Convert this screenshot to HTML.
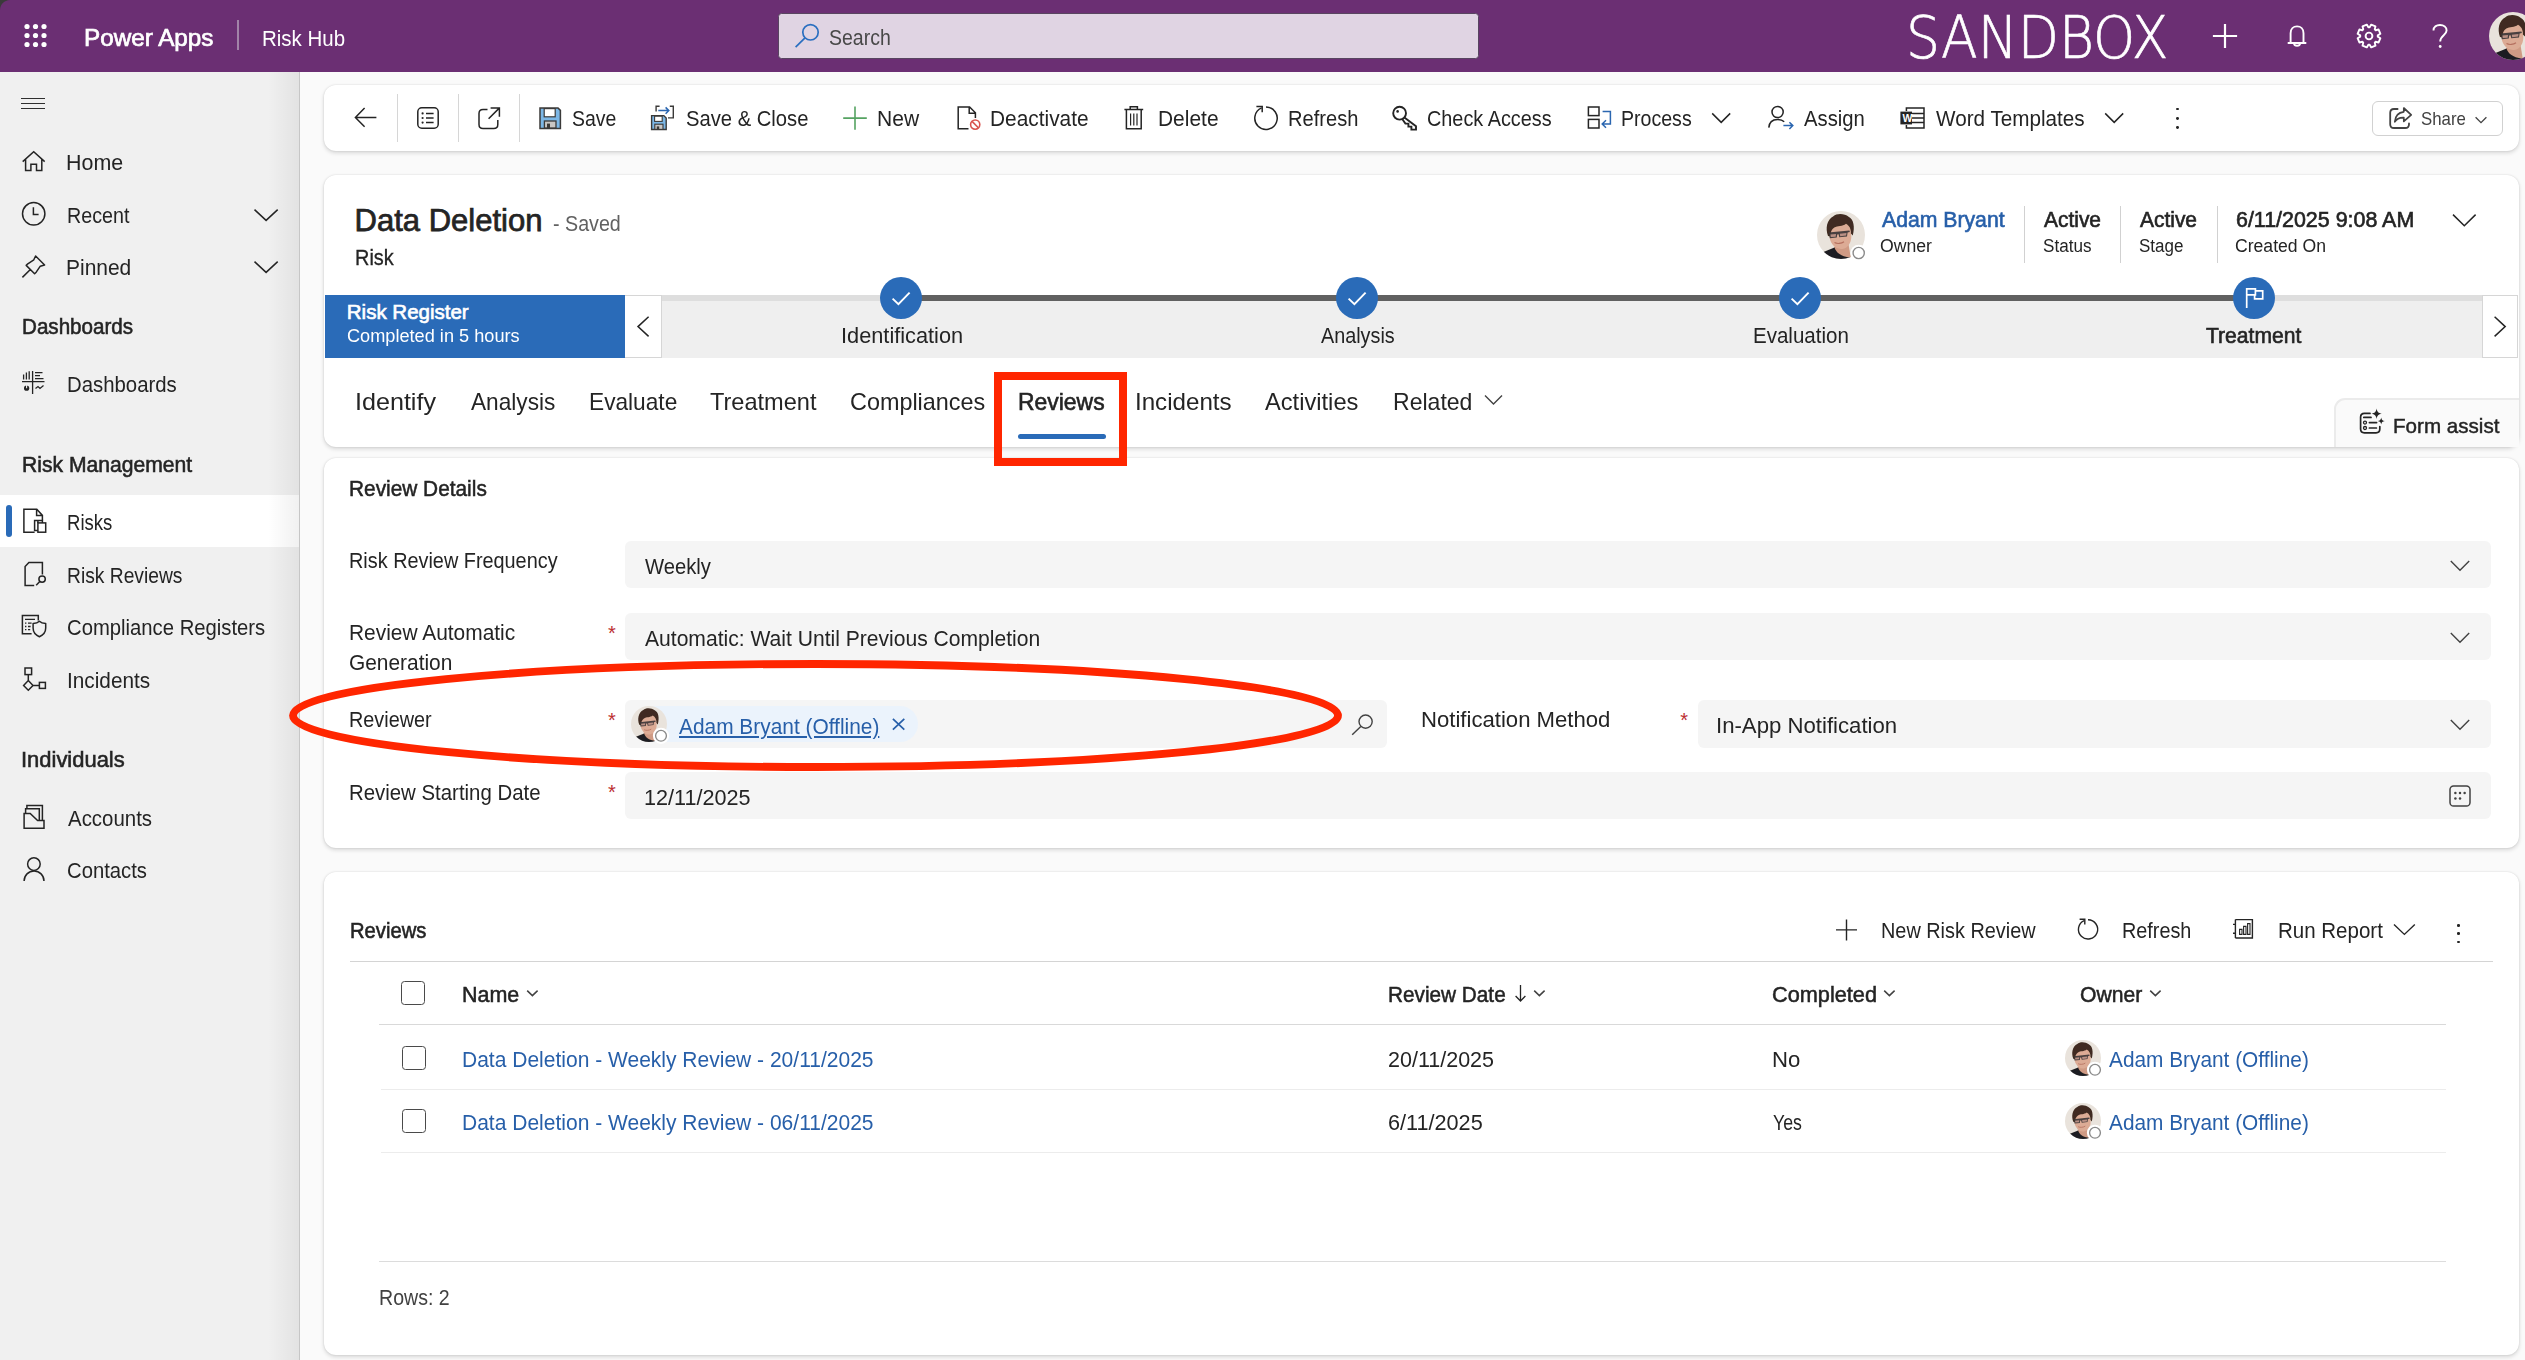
<!DOCTYPE html><html lang="en"><head><meta charset="utf-8"><title>Data Deletion - Risk - Power Apps</title><style>
html,body{margin:0;padding:0}body{width:2525px;height:1360px;overflow:hidden;position:relative;background:#fafafa;font-family:"Liberation Sans", sans-serif;color:#242424}
#app>div,#app>svg,#app>span{position:absolute;display:block}#app>span{white-space:nowrap;transform-origin:0 50%}
</style></head><body><div id="app">
<div style="left:0px;top:72px;width:2525px;height:1288px;background:#fafafa;"></div>
<div style="left:0px;top:72px;width:300px;height:1288px;background:#f0f0f0;"></div>
<div style="left:0px;top:495px;width:300px;height:52px;background:#ffffff;"></div>
<div style="left:268px;top:72px;width:32px;height:1288px;background:linear-gradient(to right,rgba(0,0,0,0),rgba(0,0,0,.06));"></div>
<div style="left:299px;top:72px;width:1px;height:1288px;background:#c6c6c6;"></div>
<div style="left:6px;top:505px;width:6px;height:32px;background:#2a6bb8;border-radius:3px;"></div>
<div style="left:0px;top:0px;width:2525px;height:72px;background:#6b2f73;"></div>
<svg style="left:0px;top:0px;" width="12" height="12" viewBox="0 0 12 12" fill="none"><path d="M0 0H10C4 0.5 0.5 4 0 10Z" fill="#3a3a3a"/></svg>
<svg style="left:22px;top:22px;" width="28" height="28" viewBox="0 0 28 28" fill="none"><circle cx="5" cy="4.5" r="2.6" fill="#fff"/><circle cx="5" cy="13.5" r="2.6" fill="#fff"/><circle cx="5" cy="22.5" r="2.6" fill="#fff"/><circle cx="13.5" cy="4.5" r="2.6" fill="#fff"/><circle cx="13.5" cy="13.5" r="2.6" fill="#fff"/><circle cx="13.5" cy="22.5" r="2.6" fill="#fff"/><circle cx="22" cy="4.5" r="2.6" fill="#fff"/><circle cx="22" cy="13.5" r="2.6" fill="#fff"/><circle cx="22" cy="22.5" r="2.6" fill="#fff"/></svg>
<span style="left:83.76px;top:27.00px;font-size:23.6px;line-height:23.6px;color:#fff;transform:scaleX(1.0282);-webkit-text-stroke:0.7px currentColor;">Power Apps</span>
<div style="left:237px;top:20px;width:1.5px;height:30px;background:#a283a8;"></div>
<span style="left:261.90px;top:29.00px;font-size:21.5px;line-height:21.5px;color:#fff;transform:scaleX(0.9524);">Risk Hub</span>
<div style="left:777.5px;top:12.5px;width:701px;height:46.5px;background:#e0d4e3;box-sizing:border-box;border:1px solid #584560;border-radius:3.5px;"></div>
<svg style="left:795px;top:23px;" width="26" height="26" viewBox="0 0 26 26" fill="none"><circle cx="15.5" cy="9.3" r="7.7" stroke="#2a6fc0" stroke-width="1.7"/><path d="M10 14.8L0.6 24.2" stroke="#2a6fc0" stroke-width="1.7"/></svg>
<span style="left:828.93px;top:28.00px;font-size:21.3px;line-height:21.3px;color:#484848;transform:scaleX(0.9154);">Search</span>
<span style="left:1906.21px;top:9.00px;font-size:58.4px;line-height:58.4px;color:#fff;font-family:'DejaVu Sans Light','DejaVu Sans',sans-serif;font-weight:200;transform:scaleX(0.9173);-webkit-text-stroke:0.7px currentColor;">SANDBOX</span>
<svg style="left:2211px;top:22px;" width="28" height="28" viewBox="0 0 28 28" fill="none"><path d="M14 1.9V26.1M1.9 14H26.1" stroke="#fff" stroke-width="2.2"/></svg>
<svg style="left:2285px;top:23px;" width="24" height="26" viewBox="0 0 24 26" fill="none"><path d="M5.6 19.6V10.2C5.6 5.8 8.4 3.4 12.05 3.4S18.5 5.8 18.5 10.2V19.6M2.7 20H21.3M9 20.7C9.4 23.5 14.7 23.5 15.1 20.7" stroke="#fff" stroke-width="1.9"/></svg>
<svg style="left:2355px;top:22px;" width="28" height="28" viewBox="0 0 28 28" fill="none"><path d="M25.39 16.22L23.62 20.48L20.66 19.75L19.75 20.66L20.48 23.62L16.22 25.39L14.64 22.78L13.36 22.78L11.78 25.39L7.52 23.62L8.25 20.66L7.34 19.75L4.38 20.48L2.61 16.22L5.22 14.64L5.22 13.36L2.61 11.78L4.38 7.52L7.34 8.25L8.25 7.34L7.52 4.38L11.78 2.61L13.36 5.22L14.64 5.22L16.22 2.61L20.48 4.38L19.75 7.34L20.66 8.25L23.62 7.52L25.39 11.78L22.78 13.36L22.78 14.64Z" stroke="#fff" stroke-width="1.9" stroke-linejoin="round"/><circle cx="14" cy="14" r="3.4" stroke="#fff" stroke-width="1.9"/></svg>
<svg style="left:2430px;top:23px;" width="20" height="27" viewBox="0 0 20 27" fill="none"><path d="M3.5 7.5C3.5 3.8 6.5 2 10 2C13.8 2 16.6 4.3 16.6 7.6C16.6 12.2 10.2 12.6 10.2 18.5" stroke="#fff" stroke-width="1.9"/><circle cx="10.2" cy="23.5" r="1.4" fill="#fff"/></svg>
<svg style="left:2489.0px;top:11.5px;overflow:visible" width="48" height="48" viewBox="0 0 48 48"><defs><clipPath id="avc1"><circle cx="24" cy="24" r="24"/></clipPath><filter id="avc1b" x="-20%" y="-20%" width="140%" height="140%"><feGaussianBlur stdDeviation="0.55"/></filter></defs><g clip-path="url(#avc1)"><rect width="48" height="48" fill="#e9e3dc"/><g filter="url(#avc1b)"><path d="M31 30L34 48H19L17 36Z" fill="#cf9a84"/><path d="M4 42L17.5 36.5C19 41 23 45.5 33.5 46.5L36 49H3Z" fill="#1f1f20"/><ellipse cx="23.4" cy="24.8" rx="10.9" ry="13.4" transform="rotate(-8 23 25)" fill="#dcab95"/><ellipse cx="25" cy="17.5" rx="9.6" ry="7" fill="#dcab95"/><path d="M11 25C8.2 17 9.8 8.6 16.4 5.2C19.6 2 27.8 2.2 31.6 5.8C36.8 8.4 38 16 35.8 24.5L33.9 22.5C34.2 18 32.4 14.6 29 12.8C25.5 15.6 20.5 14.6 17.3 16.6C14.6 18.4 13.4 21.4 13.3 25.6Z" fill="#3f2b20"/><path d="M11.3 21.6L32.4 19.4L32.9 21L30.6 21.5L30 25.4L22.3 26.3L21.6 23.2L20.2 23.4L19.8 26.6L12.8 27.2L12.2 23.4Z" fill="#3a3435" opacity=".9"/><path d="M13.4 23.6L19 23.1L18.7 25.7L13.8 26.1Z M22.8 22.7L29.5 22L29.1 24.6L23.2 25.2Z" fill="#b98f84"/><path d="M17.5 31.6C20 33 24.5 32.6 27 30.8" stroke="#b5705f" stroke-width="1.1" fill="none"/></g></g></svg>
<div style="left:21px;top:97.9px;width:24px;height:1.2px;background:#2f2f2f;"></div>
<div style="left:21px;top:102.9px;width:24px;height:1.2px;background:#2f2f2f;"></div>
<div style="left:21px;top:107.9px;width:24px;height:1.2px;background:#2f2f2f;"></div>
<svg style="left:21px;top:149px;" width="26" height="25" viewBox="0 0 26 25" fill="none"><path d="M1.7 12.6L12.7 2.8L23.7 12.6M4.6 10.6V21.6H9.9V15.2H15.5V21.6H20.8V10.6" stroke="#242424" stroke-width="1.5" fill="none" stroke-linejoin="miter"/></svg>
<span style="left:66.39px;top:153.00px;font-size:21.3px;line-height:21.3px;color:#242424;transform:scaleX(1.0056);">Home</span>
<svg style="left:20px;top:200px;" width="28" height="28" viewBox="0 0 28 28" fill="none"><circle cx="13.7" cy="13.8" r="11.2" stroke="#242424" stroke-width="1.5" fill="none"/><path d="M13.4 7.2V14.6H18.6" stroke="#242424" stroke-width="1.5" fill="none"/></svg>
<span style="left:66.53px;top:206.00px;font-size:21.3px;line-height:21.3px;color:#242424;transform:scaleX(0.9242);">Recent</span>
<svg style="left:252px;top:207px;" width="28" height="16" viewBox="0 0 28 16" fill="none"><path d="M2.5 2.6L14.1 13.4L25.7 2.6" stroke="#242424" stroke-width="1.5" fill="none"/></svg>
<svg style="left:20px;top:253px;" width="28" height="27" viewBox="0 0 28 27" fill="none"><path d="M2.4 24.4L10.6 16.2M15.6 3L24.6 12L20.3 13.2L16.2 19.2L14.6 20.8L6.2 12.4L7.8 10.8L13.8 6.8Z" stroke="#242424" stroke-width="1.5" fill="none" stroke-linejoin="round"/></svg>
<span style="left:66.42px;top:258.00px;font-size:21.3px;line-height:21.3px;color:#242424;transform:scaleX(0.9841);">Pinned</span>
<svg style="left:252px;top:259px;" width="28" height="16" viewBox="0 0 28 16" fill="none"><path d="M2.5 2.6L14.1 13.4L25.7 2.6" stroke="#242424" stroke-width="1.5" fill="none"/></svg>
<span style="left:21.83px;top:317.00px;font-size:21.3px;line-height:21.3px;color:#242424;transform:scaleX(0.9675);-webkit-text-stroke:0.55px currentColor;">Dashboards</span>
<span style="left:21.81px;top:455.00px;font-size:21.3px;line-height:21.3px;color:#242424;transform:scaleX(0.9912);-webkit-text-stroke:0.55px currentColor;">Risk Management</span>
<span style="left:20.74px;top:750.00px;font-size:21.3px;line-height:21.3px;color:#242424;transform:scaleX(1.0306);-webkit-text-stroke:0.55px currentColor;">Individuals</span>
<svg style="left:21px;top:370px;" width="25" height="25" viewBox="0 0 25 25" fill="none"><path d="M1 11.6H23.5M11.6 1V24M2.6 9.5V4.5M5.4 9.5V2.4M8.2 9.5V1.2M14 2.6H21.5M14 5.6H19M14 8.6H22.5M14.5 18.5L17 16.6L19 18.4L22.5 15.6" stroke="#242424" stroke-width="1.3" fill="none"/><circle cx="5.6" cy="18.2" r="2.6" fill="#242424"/><path d="M5.6 18.2V14.6H9.2" stroke="#f0f0f0" stroke-width="1.1" fill="none"/></svg>
<span style="left:66.87px;top:375.00px;font-size:21.3px;line-height:21.3px;color:#242424;transform:scaleX(0.9558);">Dashboards</span>
<svg style="left:22px;top:507px;" width="26" height="27" viewBox="0 0 26 27" fill="none"><path d="M12.6 25.2H1.9V2.3H14.8L20.4 8.4V13.2M14.6 2.5V8.6H20.2" stroke="#242424" stroke-width="1.5" fill="none"/><path d="M15.9 16V13.6H20.4V16M15.9 23.4H12.6V13.6H15.9" stroke="#242424" stroke-width="1.5" fill="none"/><rect x="15.9" y="15.9" width="7.8" height="9.3" stroke="#242424" stroke-width="1.5" fill="none"/></svg>
<span style="left:66.99px;top:513.00px;font-size:21.3px;line-height:21.3px;color:#242424;transform:scaleX(0.8700);">Risks</span>
<svg style="left:22px;top:560px;" width="26" height="27" viewBox="0 0 26 27" fill="none"><path d="M12.2 25.4H3.1V6.6L6.9 2.5H20.4V14.4" stroke="#242424" stroke-width="1.5" fill="none"/><circle cx="20.1" cy="19.1" r="3.2" stroke="#242424" stroke-width="1.5" fill="none"/><path d="M17.8 21.5L14.2 25.3" stroke="#242424" stroke-width="1.5" fill="none"/></svg>
<span style="left:66.95px;top:566.00px;font-size:21.3px;line-height:21.3px;color:#242424;transform:scaleX(0.9032);">Risk Reviews</span>
<svg style="left:20px;top:613px;" width="28" height="26" viewBox="0 0 28 26" fill="none"><path d="M11.6 20.7H2.4V2.6H18.3V7.4" stroke="#242424" stroke-width="1.5" fill="none"/><path d="M5 6.4H15M5 10.1H6.4M8 10.1H11.6M5 13.5H6.4M8 13.5H10.6M5 16.6H6.4M8 16.6H10.2" stroke="#242424" stroke-width="1.3" fill="none"/><path d="M19.4 8.2C20.8 9.6 22.9 10.4 25.7 10.6V15C25.7 19.4 22.8 22.2 19.4 23.7C16 22.2 13.1 19.4 13.1 15V10.6C15.9 10.4 18 9.6 19.4 8.2Z" stroke="#242424" stroke-width="1.5" fill="none" stroke-linejoin="round"/></svg>
<span style="left:66.87px;top:618.00px;font-size:21.3px;line-height:21.3px;color:#242424;transform:scaleX(0.9515);">Compliance Registers</span>
<svg style="left:21px;top:665px;" width="27" height="27" viewBox="0 0 27 27" fill="none"><rect x="4" y="3" width="6.6" height="6.6" stroke="#242424" stroke-width="1.5" fill="none"/><path d="M7.3 9.6V15.6M7.3 15.6L12 20.4L7.3 25.2L2.6 20.4ZM12 20.4H18.4" stroke="#242424" stroke-width="1.5" fill="none" stroke-linejoin="miter"/><rect x="18.4" y="17.4" width="6" height="6" stroke="#242424" stroke-width="1.5" fill="none"/></svg>
<span style="left:66.84px;top:671.00px;font-size:21.3px;line-height:21.3px;color:#242424;transform:scaleX(0.9759);">Incidents</span>
<svg style="left:22px;top:803px;" width="24" height="27" viewBox="0 0 24 27" fill="none"><path d="M4.9 5.6V2.4H20.4V17.4M3.6 10.4V5.8H17.3V17.4M2.1 10.5H8.2L15.6 17.5H22V25.2H2.1Z" stroke="#242424" stroke-width="1.5" fill="none" stroke-linejoin="miter"/></svg>
<span style="left:67.82px;top:809.00px;font-size:21.3px;line-height:21.3px;color:#242424;transform:scaleX(0.9593);">Accounts</span>
<svg style="left:22px;top:855px;" width="24" height="27" viewBox="0 0 24 27" fill="none"><circle cx="11.9" cy="9.1" r="6.3" stroke="#242424" stroke-width="1.5" fill="none"/><path d="M2.1 25.9A9.95 9.95 0 0 1 22 25.9" stroke="#242424" stroke-width="1.5" fill="none"/></svg>
<span style="left:66.87px;top:861.00px;font-size:21.3px;line-height:21.3px;color:#242424;transform:scaleX(0.9512);">Contacts</span>
<div style="left:324px;top:84.5px;width:2195px;height:66px;background:#fff;border-radius:12px;box-shadow:0 0 2px rgba(0,0,0,.12),0 2px 4px rgba(0,0,0,.14);"></div>
<svg style="left:353px;top:105px;" width="26" height="25" viewBox="0 0 26 25" fill="none"><path d="M23.4 12.4H2.6M11.6 3L2.4 12.4L11.6 21.8" stroke="#242424" stroke-width="1.5" fill="none"/></svg>
<div style="left:397px;top:94px;width:1px;height:47.5px;background:#d6d6d6;"></div>
<div style="left:458px;top:94px;width:1px;height:47.5px;background:#d6d6d6;"></div>
<div style="left:519px;top:94px;width:1px;height:47.5px;background:#d6d6d6;"></div>
<svg style="left:416px;top:106px;" width="24" height="24" viewBox="0 0 24 24" fill="none"><rect x="1.8" y="1.8" width="20.4" height="20.4" rx="4" stroke="#242424" stroke-width="1.5" fill="none"/><path d="M10 7.4H17.6M10 12H17.6M10 16.6H17.6" stroke="#242424" stroke-width="1.5" fill="none"/><circle cx="6.6" cy="7.4" r="1.1" fill="#242424"/><circle cx="6.6" cy="12" r="1.1" fill="#242424"/><circle cx="6.6" cy="16.6" r="1.1" fill="#242424"/></svg>
<svg style="left:477px;top:106px;" width="24" height="24" viewBox="0 0 24 24" fill="none"><path d="M10.5 3.6H6C3.6 3.6 2 5.2 2 7.6V18.4C2 20.8 3.6 22.4 6 22.4H16.8C19.2 22.4 20.8 20.8 20.8 18.4V14M13.6 2H22.4V10.8M22 2.4L11.6 12.8" stroke="#242424" stroke-width="1.5" fill="none"/></svg>
<svg style="left:538px;top:106px;" width="24" height="24" viewBox="0 0 24 24" fill="none"><path d="M2 2H20L22.4 4.4V22.4H2Z" fill="#7cb7e6" stroke="#3b3a39" stroke-width="1.5"/><rect x="6.2" y="2.6" width="11" height="8.2" fill="#fff" stroke="#3b3a39" stroke-width="1.2"/><rect x="6.4" y="15" width="11.6" height="7" fill="#c8c6c4" stroke="#3b3a39" stroke-width="1.3"/><rect x="9" y="17.6" width="3" height="4.6" fill="#3b3a39"/></svg>
<span style="left:572.12px;top:109.00px;font-size:21.3px;line-height:21.3px;color:#242424;transform:scaleX(0.9130);">Save</span>
<svg style="left:650px;top:104px;" width="26" height="27" viewBox="0 0 26 27" fill="none"><path d="M1.6 11.6H13.8L16.2 14V25.5H1.6Z" fill="#7cb7e6" stroke="#3b3a39" stroke-width="1.4"/><rect x="4.6" y="12.2" width="7.6" height="5.2" fill="#fff" stroke="#3b3a39" stroke-width="1.1"/><rect x="4.8" y="20.2" width="8.2" height="5.2" fill="#c8c6c4" stroke="#3b3a39" stroke-width="1.1"/><rect x="6.8" y="22.4" width="2.4" height="3" fill="#3b3a39"/><path d="M9.6 2.3H6.1V7.4M19.8 2.3H23.3V13.9H18" stroke="#3b3a39" stroke-width="1.4" fill="none"/><path d="M8.3 6.6H18.7M15.6 3.4L18.8 6.6L15.6 9.8" stroke="#2b66b0" stroke-width="1.5" fill="none"/></svg>
<span style="left:685.85px;top:109.00px;font-size:21.3px;line-height:21.3px;color:#242424;transform:scaleX(0.9488);">Save &amp; Close</span>
<svg style="left:842px;top:105px;" width="26" height="26" viewBox="0 0 26 26" fill="none"><path d="M13 1.4V24.8M1.2 13.1H24.8" stroke="#55a362" stroke-width="1.6"/></svg>
<span style="left:877.42px;top:109.00px;font-size:21.3px;line-height:21.3px;color:#242424;transform:scaleX(0.9878);">New</span>
<svg style="left:956px;top:105px;" width="26" height="26" viewBox="0 0 26 26" fill="none"><path d="M12.5 23.8H2.2V2H13.6L19.4 7.8V13M13.2 2.2V8.2H19.2" stroke="#242424" stroke-width="1.5" fill="none"/><circle cx="19.2" cy="19.6" r="4.6" stroke="#d9534f" stroke-width="1.6" fill="#fff"/><path d="M16.1 16.4L22.3 22.8" stroke="#d9534f" stroke-width="1.6"/></svg>
<span style="left:989.84px;top:109.00px;font-size:21.3px;line-height:21.3px;color:#242424;transform:scaleX(0.9796);">Deactivate</span>
<svg style="left:1123px;top:105px;" width="22" height="26" viewBox="0 0 22 26" fill="none"><path d="M1.4 4.6H20.2M7.2 4.4V1.8H14.4V4.4M3.4 4.8V23.8H18.2V4.8" stroke="#242424" stroke-width="1.5" fill="none"/><path d="M7.6 8.6V20.4M10.8 8.6V20.4M14 8.6V20.4" stroke="#242424" stroke-width="1.2"/></svg>
<span style="left:1158.02px;top:109.00px;font-size:21.3px;line-height:21.3px;color:#242424;transform:scaleX(0.9831);">Delete</span>
<svg style="left:1252px;top:104px;" width="28" height="28" viewBox="0 0 28 28" fill="none"><path d="M9.6 3.9A11.2 11.2 0 1 0 14 3" stroke="#242424" stroke-width="1.5" fill="none"/><path d="M4.4 2.4H10.2V8.2" stroke="#242424" stroke-width="1.5" fill="none"/></svg>
<span style="left:1287.91px;top:109.00px;font-size:21.3px;line-height:21.3px;color:#242424;transform:scaleX(0.9437);">Refresh</span>
<svg style="left:1391px;top:105px;" width="28" height="26" viewBox="0 0 28 26" fill="none"><circle cx="8.6" cy="8.2" r="6.4" stroke="#242424" stroke-width="1.9" fill="none"/><circle cx="6.6" cy="6.4" r="1.3" fill="#242424"/><path d="M13.4 12.4L25 21.2V24.6H20.4V21.6H17.4V18.6H14.4L11.4 14.2" stroke="#242424" stroke-width="1.9" fill="none" stroke-linejoin="miter"/></svg>
<span style="left:1427.44px;top:109.00px;font-size:21.3px;line-height:21.3px;color:#242424;transform:scaleX(0.9318);">Check Access</span>
<svg style="left:1586px;top:105px;" width="28" height="26" viewBox="0 0 28 26" fill="none"><rect x="2.4" y="2" width="10.6" height="8.6" stroke="#242424" stroke-width="1.5" fill="none"/><rect x="2.4" y="14.4" width="10.6" height="8.6" stroke="#242424" stroke-width="1.5" fill="none"/><path d="M16.6 6.4H24.4V19H16.4M20 15.2L16.2 19L20 22.8" stroke="#2b66b0" stroke-width="1.5" fill="none"/></svg>
<span style="left:1620.96px;top:109.00px;font-size:21.3px;line-height:21.3px;color:#242424;transform:scaleX(0.9189);">Process</span>
<svg style="left:1710px;top:111px;" width="22" height="14" viewBox="0 0 22 14" fill="none"><path d="M2.2 2.4L11.2 11.4L20.2 2.4" stroke="#242424" stroke-width="1.5" fill="none"/></svg>
<svg style="left:1767px;top:104px;" width="28" height="27" viewBox="0 0 28 27" fill="none"><circle cx="10.6" cy="8" r="5.6" stroke="#242424" stroke-width="1.5" fill="none"/><path d="M1.8 23.6C2.2 17.6 6.2 15.4 10.6 15.4C13.4 15.4 15.6 16.2 17.2 17.8" stroke="#242424" stroke-width="1.5" fill="none"/><path d="M16.4 21.6H25.6M22.4 18.2L25.8 21.6L22.4 25" stroke="#2b66b0" stroke-width="1.5" fill="none"/></svg>
<span style="left:1804.41px;top:109.00px;font-size:21.3px;line-height:21.3px;color:#242424;transform:scaleX(0.9516);">Assign</span>
<svg style="left:1899px;top:106px;" width="27" height="24" viewBox="0 0 27 24" fill="none"><path d="M7.4 5V2H25V22H7.4V19M12.6 7.4H25M12.6 12H25M12.6 16.6H25" stroke="#242424" stroke-width="1.5" fill="none"/><rect x="1.4" y="5.6" width="11.6" height="12.8" fill="#242424"/></svg>
<span style="left:1902.60px;top:113.00px;font-size:10.5px;line-height:10.5px;color:#fff;font-weight:700;">W</span>
<span style="left:1936.39px;top:109.00px;font-size:21.3px;line-height:21.3px;color:#242424;transform:scaleX(0.9706);">Word Templates</span>
<svg style="left:2103px;top:111px;" width="22" height="14" viewBox="0 0 22 14" fill="none"><path d="M2.2 2.4L11.2 11.4L20.2 2.4" stroke="#242424" stroke-width="1.5" fill="none"/></svg>
<div style="left:2176.1px;top:107.6px;width:2.8px;height:2.8px;background:#242424;border-radius:50%;"></div>
<div style="left:2176.1px;top:116.8px;width:2.8px;height:2.8px;background:#242424;border-radius:50%;"></div>
<div style="left:2176.1px;top:126.1px;width:2.8px;height:2.8px;background:#242424;border-radius:50%;"></div>
<div style="left:2372px;top:101px;width:131px;height:35px;background:#fff;box-sizing:border-box;border:1px solid #d1d1d1;border-radius:6px;"></div>
<svg style="left:2388px;top:106px;" width="25" height="24" viewBox="0 0 25 24" fill="none"><path d="M9.6 3H6C3.6 3 2.2 4.4 2.2 6.8V18.2C2.2 20.6 3.6 22 6 22H17.2C19.6 22 21 20.6 21 18.2V17.4" stroke="#424242" stroke-width="1.8" fill="none" stroke-linecap="round"/><path d="M15.8 2L23.2 8.8L15.8 15.4V11.6C11.4 11.4 8.6 12.8 6.8 15.8C7.2 10.4 10.2 6.4 15.8 5.8Z" stroke="#424242" stroke-width="1.7" fill="none" stroke-linejoin="round"/></svg>
<span style="left:2421.44px;top:111.00px;font-size:17.8px;line-height:17.8px;color:#424242;transform:scaleX(0.9457);">Share</span>
<svg style="left:2474px;top:115px;" width="14" height="10" viewBox="0 0 14 10" fill="none"><path d="M1.6 2.2L7 7.6L12.4 2.2" stroke="#424242" stroke-width="1.3" fill="none"/></svg>
<div style="left:324px;top:175px;width:2195px;height:271.6px;background:#fff;border-radius:12px;box-shadow:0 0 2px rgba(0,0,0,.12),0 2px 4px rgba(0,0,0,.14);"></div>
<span style="left:354.59px;top:205.00px;font-size:31px;line-height:31px;color:#242424;-webkit-text-stroke:0.75px currentColor;">Data Deletion</span>
<span style="left:552.84px;top:214.00px;font-size:21.3px;line-height:21.3px;color:#616161;transform:scaleX(0.9236);">- Saved</span>
<span style="left:354.93px;top:248.00px;font-size:21.3px;line-height:21.3px;color:#242424;transform:scaleX(0.9359);-webkit-text-stroke:0.3px currentColor;">Risk</span>
<svg style="left:1817.0px;top:211.0px;overflow:visible" width="48" height="48" viewBox="0 0 48 48"><defs><clipPath id="avc2"><circle cx="24" cy="24" r="24"/></clipPath><filter id="avc2b" x="-20%" y="-20%" width="140%" height="140%"><feGaussianBlur stdDeviation="0.55"/></filter></defs><g clip-path="url(#avc2)"><rect width="48" height="48" fill="#e9e3dc"/><g filter="url(#avc2b)"><path d="M31 30L34 48H19L17 36Z" fill="#cf9a84"/><path d="M4 42L17.5 36.5C19 41 23 45.5 33.5 46.5L36 49H3Z" fill="#1f1f20"/><ellipse cx="23.4" cy="24.8" rx="10.9" ry="13.4" transform="rotate(-8 23 25)" fill="#dcab95"/><ellipse cx="25" cy="17.5" rx="9.6" ry="7" fill="#dcab95"/><path d="M11 25C8.2 17 9.8 8.6 16.4 5.2C19.6 2 27.8 2.2 31.6 5.8C36.8 8.4 38 16 35.8 24.5L33.9 22.5C34.2 18 32.4 14.6 29 12.8C25.5 15.6 20.5 14.6 17.3 16.6C14.6 18.4 13.4 21.4 13.3 25.6Z" fill="#3f2b20"/><path d="M11.3 21.6L32.4 19.4L32.9 21L30.6 21.5L30 25.4L22.3 26.3L21.6 23.2L20.2 23.4L19.8 26.6L12.8 27.2L12.2 23.4Z" fill="#3a3435" opacity=".9"/><path d="M13.4 23.6L19 23.1L18.7 25.7L13.8 26.1Z M22.8 22.7L29.5 22L29.1 24.6L23.2 25.2Z" fill="#b98f84"/><path d="M17.5 31.6C20 33 24.5 32.6 27 30.8" stroke="#b5705f" stroke-width="1.1" fill="none"/></g></g><circle cx="41.70" cy="42.00" r="8.30" fill="#fff"/><circle cx="41.70" cy="42.00" r="5.60" fill="#fff" stroke="#8a8a8a" stroke-width="1.35"/></svg>
<span style="left:1881.80px;top:210.00px;font-size:21.3px;line-height:21.3px;color:#275fa9;transform:scaleX(0.9960);-webkit-text-stroke:0.6px currentColor;">Adam Bryant</span>
<span style="left:1880.21px;top:237.00px;font-size:18px;line-height:18px;color:#242424;transform:scaleX(0.9808);">Owner</span>
<div style="left:2023.5px;top:206px;width:1px;height:56.5px;background:#d1d1d1;"></div>
<span style="left:2043.80px;top:210.00px;font-size:21.3px;line-height:21.3px;color:#242424;transform:scaleX(0.9828);-webkit-text-stroke:0.6px currentColor;">Active</span>
<span style="left:2042.85px;top:237.00px;font-size:18px;line-height:18px;color:#242424;transform:scaleX(0.9490);">Status</span>
<div style="left:2120px;top:206px;width:1px;height:56.5px;background:#d1d1d1;"></div>
<span style="left:2139.80px;top:210.00px;font-size:21.3px;line-height:21.3px;color:#242424;transform:scaleX(0.9828);-webkit-text-stroke:0.6px currentColor;">Active</span>
<span style="left:2138.86px;top:237.00px;font-size:18px;line-height:18px;color:#242424;transform:scaleX(0.9444);">Stage</span>
<div style="left:2216.5px;top:206px;width:1px;height:56.5px;background:#d1d1d1;"></div>
<span style="left:2235.80px;top:210.00px;font-size:21.3px;line-height:21.3px;color:#242424;transform:scaleX(1.0057);-webkit-text-stroke:0.6px currentColor;">6/11/2025 9:08 AM</span>
<span style="left:2235.22px;top:237.00px;font-size:18px;line-height:18px;color:#242424;transform:scaleX(0.9780);">Created On</span>
<svg style="left:2451px;top:212px;" width="27" height="17" viewBox="0 0 27 17" fill="none"><path d="M2 2.6L13.3 13.8L24.6 2.6" stroke="#242424" stroke-width="1.5" fill="none"/></svg>
<div style="left:661px;top:295px;width:1821px;height:62.5px;background:#efefef;"></div>
<div style="left:661px;top:295px;width:1821px;height:6px;background:#dedede;"></div>
<div style="left:901px;top:295px;width:1353px;height:6px;background:#616161;"></div>
<div style="left:324.5px;top:295px;width:300.5px;height:62.5px;background:#2a6bb8;"></div>
<span style="left:346.80px;top:302.00px;font-size:20.5px;line-height:20.5px;color:#fff;-webkit-text-stroke:0.65px currentColor;">Risk Register</span>
<span style="left:346.79px;top:327.00px;font-size:18px;line-height:18px;color:#fff;transform:scaleX(1.0089);">Completed in 5 hours</span>
<div style="left:625px;top:295px;width:36.5px;height:62.5px;background:#fff;box-sizing:border-box;border:1px solid #d6d6d6;border-left:none;"></div>
<svg style="left:634px;top:314px;" width="18" height="25" viewBox="0 0 18 25" fill="none"><path d="M14.6 2.8L4 12.6L14.6 22.4" stroke="#242424" stroke-width="1.5" fill="none"/></svg>
<div style="left:2481.5px;top:295px;width:36.5px;height:62.5px;background:#fff;box-sizing:border-box;border:1px solid #d6d6d6;"></div>
<svg style="left:2491px;top:314px;" width="18" height="25" viewBox="0 0 18 25" fill="none"><path d="M3.6 2.8L14.2 12.6L3.6 22.4" stroke="#242424" stroke-width="1.5" fill="none"/></svg>
<svg style="left:880px;top:276.8px;" width="42" height="42" viewBox="0 0 42 42" fill="none"><circle cx="21" cy="21" r="21" fill="#2a6bb8"/><path d="M12.6 21.6L18.4 27.2L29.6 15.6" stroke="#fff" stroke-width="1.9" fill="none"/></svg>
<span style="left:840.71px;top:326.00px;font-size:21.3px;line-height:21.3px;color:#242424;transform:scaleX(1.0214);">Identification</span>
<svg style="left:1336px;top:276.8px;" width="42" height="42" viewBox="0 0 42 42" fill="none"><circle cx="21" cy="21" r="21" fill="#2a6bb8"/><path d="M12.6 21.6L18.4 27.2L29.6 15.6" stroke="#fff" stroke-width="1.9" fill="none"/></svg>
<span style="left:1321.27px;top:326.00px;font-size:21.3px;line-height:21.3px;color:#242424;transform:scaleX(0.9295);">Analysis</span>
<svg style="left:1779px;top:276.8px;" width="42" height="42" viewBox="0 0 42 42" fill="none"><circle cx="21" cy="21" r="21" fill="#2a6bb8"/><path d="M12.6 21.6L18.4 27.2L29.6 15.6" stroke="#fff" stroke-width="1.9" fill="none"/></svg>
<span style="left:1752.79px;top:326.00px;font-size:21.3px;line-height:21.3px;color:#242424;transform:scaleX(0.9639);">Evaluation</span>
<svg style="left:2233px;top:276.8px;" width="42" height="42" viewBox="0 0 42 42" fill="none"><circle cx="21" cy="21" r="21" fill="#2a6bb8"/><path d="M13.7 30.9V11.9H22.4V17.9H13.7M22.4 13.8H29.7V21.8H21.6V17.9" stroke="#fff" stroke-width="1.7" fill="none"/></svg>
<span style="left:2206.30px;top:326.00px;font-size:21.3px;line-height:21.3px;color:#242424;transform:scaleX(0.9897);-webkit-text-stroke:0.6px currentColor;">Treatment</span>
<span style="left:354.68px;top:390.00px;font-size:24px;line-height:24px;color:#242424;transform:scaleX(1.0467);">Identify</span>
<span style="left:471.41px;top:390.00px;font-size:24px;line-height:24px;color:#242424;transform:scaleX(0.9432);">Analysis</span>
<span style="left:588.88px;top:390.00px;font-size:24px;line-height:24px;color:#242424;transform:scaleX(0.9451);">Evaluate</span>
<span style="left:709.82px;top:390.00px;font-size:24px;line-height:24px;color:#242424;transform:scaleX(0.9813);">Treatment</span>
<span style="left:849.83px;top:390.00px;font-size:24px;line-height:24px;color:#242424;transform:scaleX(0.9745);">Compliances</span>
<span style="left:1134.79px;top:390.00px;font-size:24px;line-height:24px;color:#242424;transform:scaleX(1.0054);">Incidents</span>
<span style="left:1265.39px;top:390.00px;font-size:24px;line-height:24px;color:#242424;transform:scaleX(0.9862);">Activities</span>
<span style="left:1392.65px;top:390.00px;font-size:24px;line-height:24px;color:#242424;transform:scaleX(0.9600);">Related</span>
<span style="left:1018.47px;top:390.00px;font-size:24px;line-height:24px;color:#242424;transform:scaleX(0.9551);-webkit-text-stroke:0.6px currentColor;">Reviews</span>
<div style="left:1018px;top:434px;width:87.5px;height:5.2px;background:#2a6bb8;border-radius:3px;"></div>
<svg style="left:1483px;top:393px;" width="21" height="14" viewBox="0 0 21 14" fill="none"><path d="M2 2.6L10.5 11L19 2.6" stroke="#424242" stroke-width="1.4" fill="none"/></svg>
<div style="left:2334px;top:398px;width:185px;height:48.5px;background:#fafafa;box-sizing:border-box;border:2.5px solid #ebebeb;border-right:none;border-bottom:none;border-radius:11px 0 0 0;"></div>
<svg style="left:2358px;top:407px;" width="29" height="29" viewBox="0 0 29 29" fill="none"><path d="M12 6.4H6.4C4 6.4 2.6 7.8 2.6 10.2V22C2.6 24.4 4 25.8 6.4 25.8H18C20.4 25.8 21.8 24.4 21.8 22V19.5M5.8 10.4H13" stroke="#242424" stroke-width="1.7" fill="none" stroke-linecap="round"/><circle cx="7" cy="15.6" r="1.5" stroke="#242424" stroke-width="1.3" fill="none"/><circle cx="7" cy="21" r="1.5" stroke="#242424" stroke-width="1.3" fill="none"/><path d="M11.4 15.6H18.6M11.4 21H18.4" stroke="#242424" stroke-width="1.7" fill="none" stroke-linecap="round"/><path d="M18.6 1.6C19.2 5 20.4 6.2 23.8 6.8C20.4 7.4 19.2 8.6 18.6 12C18 8.6 16.8 7.4 13.4 6.8C16.8 6.2 18 5 18.6 1.6Z M23.2 10.4C23.6 12.8 24.4 13.6 26.8 14C24.4 14.4 23.6 15.2 23.2 17.6C22.8 15.2 22 14.4 19.6 14C22 13.6 22.8 12.8 23.2 10.4Z" fill="#242424"/></svg>
<span style="left:2393.41px;top:416.00px;font-size:20.8px;line-height:20.8px;color:#242424;transform:scaleX(0.9906);-webkit-text-stroke:0.45px currentColor;">Form assist</span>
<div style="left:324px;top:458px;width:2195px;height:390px;background:#fff;border-radius:12px;box-shadow:0 0 2px rgba(0,0,0,.12),0 2px 4px rgba(0,0,0,.14);"></div>
<span style="left:349.22px;top:479.00px;font-size:21.3px;line-height:21.3px;color:#242424;transform:scaleX(0.9784);-webkit-text-stroke:0.5px currentColor;">Review Details</span>
<span style="left:348.90px;top:551.00px;font-size:21.3px;line-height:21.3px;color:#242424;transform:scaleX(0.9324);">Risk Review Frequency</span>
<div style="left:625px;top:541.3px;width:1866px;height:46.4px;background:#f5f5f5;border-radius:6px;"></div>
<span style="left:644.80px;top:557.00px;font-size:21.3px;line-height:21.3px;color:#242424;transform:scaleX(0.9493);">Weekly</span>
<svg style="left:2449px;top:559px;" width="22" height="14" viewBox="0 0 22 14" fill="none"><path d="M1.8 2L11 11.2L20.2 2" stroke="#424242" stroke-width="1.4" fill="none"/></svg>
<span style="left:348.83px;top:623.00px;font-size:21.3px;line-height:21.3px;color:#242424;transform:scaleX(0.9820);">Review Automatic</span>
<span style="left:348.83px;top:653.00px;font-size:21.3px;line-height:21.3px;color:#242424;transform:scaleX(0.9806);">Generation</span>
<span style="left:608.00px;top:623.00px;font-size:20px;line-height:20px;color:#bc2f32;">*</span>
<div style="left:625px;top:613.3px;width:1866px;height:46.4px;background:#f5f5f5;border-radius:6px;"></div>
<span style="left:645.39px;top:629.00px;font-size:21.3px;line-height:21.3px;color:#242424;transform:scaleX(0.9899);">Automatic: Wait Until Previous Completion</span>
<svg style="left:2449px;top:631px;" width="22" height="14" viewBox="0 0 22 14" fill="none"><path d="M1.8 2L11 11.2L20.2 2" stroke="#424242" stroke-width="1.4" fill="none"/></svg>
<span style="left:348.90px;top:710.00px;font-size:21.3px;line-height:21.3px;color:#242424;transform:scaleX(0.9310);">Reviewer</span>
<span style="left:608.00px;top:710.00px;font-size:20px;line-height:20px;color:#bc2f32;">*</span>
<div style="left:625px;top:700.2px;width:762px;height:47.4px;background:#f5f5f5;border-radius:6px;"></div>
<div style="left:640px;top:706.3px;width:278px;height:35.4px;background:#ebf3fc;border-radius:18px;"></div>
<svg style="left:631.0px;top:706.2px;overflow:visible" width="36" height="36" viewBox="0 0 48 48"><defs><clipPath id="avc3"><circle cx="24" cy="24" r="24"/></clipPath><filter id="avc3b" x="-20%" y="-20%" width="140%" height="140%"><feGaussianBlur stdDeviation="0.55"/></filter></defs><g clip-path="url(#avc3)"><rect width="48" height="48" fill="#e9e3dc"/><g filter="url(#avc3b)"><path d="M31 30L34 48H19L17 36Z" fill="#cf9a84"/><path d="M4 42L17.5 36.5C19 41 23 45.5 33.5 46.5L36 49H3Z" fill="#1f1f20"/><ellipse cx="23.4" cy="24.8" rx="10.9" ry="13.4" transform="rotate(-8 23 25)" fill="#dcab95"/><ellipse cx="25" cy="17.5" rx="9.6" ry="7" fill="#dcab95"/><path d="M11 25C8.2 17 9.8 8.6 16.4 5.2C19.6 2 27.8 2.2 31.6 5.8C36.8 8.4 38 16 35.8 24.5L33.9 22.5C34.2 18 32.4 14.6 29 12.8C25.5 15.6 20.5 14.6 17.3 16.6C14.6 18.4 13.4 21.4 13.3 25.6Z" fill="#3f2b20"/><path d="M11.3 21.6L32.4 19.4L32.9 21L30.6 21.5L30 25.4L22.3 26.3L21.6 23.2L20.2 23.4L19.8 26.6L12.8 27.2L12.2 23.4Z" fill="#3a3435" opacity=".9"/><path d="M13.4 23.6L19 23.1L18.7 25.7L13.8 26.1Z M22.8 22.7L29.5 22L29.1 24.6L23.2 25.2Z" fill="#b98f84"/><path d="M17.5 31.6C20 33 24.5 32.6 27 30.8" stroke="#b5705f" stroke-width="1.1" fill="none"/></g></g><circle cx="40.00" cy="39.73" r="10.80" fill="#fff"/><circle cx="40.00" cy="39.73" r="7.20" fill="#fff" stroke="#8a8a8a" stroke-width="1.80"/></svg>
<span style="left:679.00px;top:717.00px;font-size:21.3px;line-height:21.3px;color:#275fa9;transform:scaleX(0.9803);text-decoration:underline;text-decoration-thickness:1.5px;text-underline-offset:1.6px;">Adam Bryant (Offline)</span>
<svg style="left:890px;top:716px;" width="17" height="16" viewBox="0 0 17 16" fill="none"><path d="M2.9 2.8L14.3 13.6M14.3 2.8L2.9 13.6" stroke="#275fa9" stroke-width="1.7" fill="none"/></svg>
<svg style="left:1350px;top:712px;" width="26" height="25" viewBox="0 0 26 25" fill="none"><circle cx="15.6" cy="9.6" r="6.6" stroke="#424242" stroke-width="1.4" fill="none"/><path d="M10.8 14.4L2.2 22.8" stroke="#424242" stroke-width="1.4"/></svg>
<span style="left:1420.72px;top:710.00px;font-size:21.3px;line-height:21.3px;color:#242424;transform:scaleX(1.0391);">Notification Method</span>
<span style="left:1680.30px;top:710.00px;font-size:20px;line-height:20px;color:#bc2f32;">*</span>
<div style="left:1698px;top:700.2px;width:793px;height:47.4px;background:#f5f5f5;border-radius:6px;"></div>
<span style="left:1715.74px;top:716.00px;font-size:21.3px;line-height:21.3px;color:#242424;transform:scaleX(1.0409);">In-App Notification</span>
<svg style="left:2449px;top:718px;" width="22" height="14" viewBox="0 0 22 14" fill="none"><path d="M1.8 2L11 11.2L20.2 2" stroke="#424242" stroke-width="1.4" fill="none"/></svg>
<span style="left:348.86px;top:783.00px;font-size:21.3px;line-height:21.3px;color:#242424;transform:scaleX(0.9571);">Review Starting Date</span>
<span style="left:608.00px;top:782.00px;font-size:20px;line-height:20px;color:#bc2f32;">*</span>
<div style="left:625px;top:772.3px;width:1866px;height:47.2px;background:#f5f5f5;border-radius:6px;"></div>
<span style="left:643.78px;top:788.00px;font-size:21.3px;line-height:21.3px;color:#242424;transform:scaleX(1.0146);">12/11/2025</span>
<svg style="left:2448px;top:784px;" width="24" height="24" viewBox="0 0 24 24" fill="none"><rect x="2" y="2" width="20" height="20" rx="3.6" stroke="#424242" stroke-width="1.5" fill="none"/><circle cx="7.4" cy="9" r="1.25" fill="#424242"/><circle cx="12" cy="9" r="1.25" fill="#424242"/><circle cx="16.6" cy="9" r="1.25" fill="#424242"/><circle cx="7.4" cy="14.6" r="1.25" fill="#424242"/><circle cx="12" cy="14.6" r="1.25" fill="#424242"/></svg>
<div style="left:324px;top:872px;width:2195px;height:483px;background:#fff;border-radius:12px;box-shadow:0 0 2px rgba(0,0,0,.12),0 2px 4px rgba(0,0,0,.14);"></div>
<span style="left:349.85px;top:921.00px;font-size:21.3px;line-height:21.3px;color:#242424;transform:scaleX(0.9494);-webkit-text-stroke:0.55px currentColor;">Reviews</span>
<svg style="left:1834px;top:918px;" width="25" height="24" viewBox="0 0 25 24" fill="none"><path d="M12.5 1.4V22.4M2 11.9H23" stroke="#242424" stroke-width="1.4"/></svg>
<span style="left:1880.90px;top:921.00px;font-size:21.3px;line-height:21.3px;color:#242424;transform:scaleX(0.9329);">New Risk Review</span>
<svg style="left:2075px;top:917px;" width="26" height="25" viewBox="0 0 26 25" fill="none"><path d="M9.2 3.6A9.6 9.6 0 1 0 13 2.8" stroke="#242424" stroke-width="1.4" fill="none"/><path d="M4.6 2.2H9.8V7.4" stroke="#242424" stroke-width="1.4" fill="none"/></svg>
<span style="left:2122.48px;top:921.00px;font-size:21.3px;line-height:21.3px;color:#242424;transform:scaleX(0.9306);">Refresh</span>
<svg style="left:2232px;top:918px;" width="23" height="22" viewBox="0 0 23 22" fill="none"><path d="M3.4 1.6H20.4V20H3.4M3.4 1.6V20M1 6.4H3.4M1 15.2H3.4" stroke="#242424" stroke-width="1.4" fill="none"/><path d="M7.6 11.4H10V16.4H7.6ZM11.6 8.4H14V16.4H11.6ZM15.6 5.6H18V16.4H15.6Z" stroke="#242424" stroke-width="1.1" fill="none"/></svg>
<span style="left:2277.65px;top:921.00px;font-size:21.3px;line-height:21.3px;color:#242424;transform:scaleX(0.9626);">Run Report</span>
<svg style="left:2392px;top:922px;" width="25" height="15" viewBox="0 0 25 15" fill="none"><path d="M2 2.4L12.4 12.4L22.8 2.4" stroke="#242424" stroke-width="1.4" fill="none"/></svg>
<div style="left:2457px;top:924.0px;width:2.6px;height:2.6px;background:#242424;border-radius:50%;"></div>
<div style="left:2457px;top:932.2px;width:2.6px;height:2.6px;background:#242424;border-radius:50%;"></div>
<div style="left:2457px;top:940.6px;width:2.6px;height:2.6px;background:#242424;border-radius:50%;"></div>
<div style="left:350px;top:961px;width:2143px;height:1.2px;background:#d4d4d4;"></div>
<div style="left:401.2px;top:981.4px;width:23.6px;height:23.2px;background:#fff;box-sizing:border-box;border:1.3px solid #4a4a4a;border-radius:3.5px;"></div>
<span style="left:462.38px;top:985.00px;font-size:21.3px;line-height:21.3px;color:#242424;transform:scaleX(1.0091);-webkit-text-stroke:0.5px currentColor;">Name</span>
<svg style="left:526px;top:988.5px;" width="13" height="9" viewBox="0 0 13 9" fill="none"><path d="M1.2 1.6L6.4 6.6L11.6 1.6" stroke="#424242" stroke-width="1.5" fill="none"/></svg>
<span style="left:1388.43px;top:985.00px;font-size:21.3px;line-height:21.3px;color:#242424;transform:scaleX(0.9748);-webkit-text-stroke:0.5px currentColor;">Review Date</span>
<svg style="left:1514px;top:984px;" width="13" height="19" viewBox="0 0 13 19" fill="none"><path d="M6.5 1V17M1.6 12L6.5 17L11.4 12" stroke="#242424" stroke-width="1.3" fill="none"/></svg>
<svg style="left:1533px;top:988.5px;" width="13" height="9" viewBox="0 0 13 9" fill="none"><path d="M1.2 1.6L6.4 6.6L11.6 1.6" stroke="#424242" stroke-width="1.5" fill="none"/></svg>
<span style="left:1772.37px;top:985.00px;font-size:21.3px;line-height:21.3px;color:#242424;transform:scaleX(1.0198);-webkit-text-stroke:0.5px currentColor;">Completed</span>
<svg style="left:1883.2px;top:988.5px;" width="13" height="9" viewBox="0 0 13 9" fill="none"><path d="M1.2 1.6L6.4 6.6L11.6 1.6" stroke="#424242" stroke-width="1.5" fill="none"/></svg>
<span style="left:2080.40px;top:985.00px;font-size:21.3px;line-height:21.3px;color:#242424;transform:scaleX(0.9919);-webkit-text-stroke:0.5px currentColor;">Owner</span>
<svg style="left:2149px;top:988.5px;" width="13" height="9" viewBox="0 0 13 9" fill="none"><path d="M1.2 1.6L6.4 6.6L11.6 1.6" stroke="#424242" stroke-width="1.5" fill="none"/></svg>
<div style="left:379px;top:1024px;width:2067px;height:1.2px;background:#d9d9d9;"></div>
<div style="left:402.2px;top:1046.4px;width:23.6px;height:23.2px;background:#fff;box-sizing:border-box;border:1.3px solid #4a4a4a;border-radius:3.5px;"></div>
<span style="left:461.83px;top:1050.00px;font-size:21.3px;line-height:21.3px;color:#275fa9;transform:scaleX(0.9867);">Data Deletion - Weekly Review - 20/11/2025</span>
<span style="left:1388.39px;top:1050.00px;font-size:21.3px;line-height:21.3px;color:#242424;transform:scaleX(1.0096);">20/11/2025</span>
<span style="left:1772.35px;top:1050.00px;font-size:21.3px;line-height:21.3px;color:#242424;transform:scaleX(1.0400);">No</span>
<svg style="left:2065.0px;top:1040.0px;overflow:visible" width="36" height="36" viewBox="0 0 48 48"><defs><clipPath id="avc4"><circle cx="24" cy="24" r="24"/></clipPath><filter id="avc4b" x="-20%" y="-20%" width="140%" height="140%"><feGaussianBlur stdDeviation="0.55"/></filter></defs><g clip-path="url(#avc4)"><rect width="48" height="48" fill="#e9e3dc"/><g filter="url(#avc4b)"><path d="M31 30L34 48H19L17 36Z" fill="#cf9a84"/><path d="M4 42L17.5 36.5C19 41 23 45.5 33.5 46.5L36 49H3Z" fill="#1f1f20"/><ellipse cx="23.4" cy="24.8" rx="10.9" ry="13.4" transform="rotate(-8 23 25)" fill="#dcab95"/><ellipse cx="25" cy="17.5" rx="9.6" ry="7" fill="#dcab95"/><path d="M11 25C8.2 17 9.8 8.6 16.4 5.2C19.6 2 27.8 2.2 31.6 5.8C36.8 8.4 38 16 35.8 24.5L33.9 22.5C34.2 18 32.4 14.6 29 12.8C25.5 15.6 20.5 14.6 17.3 16.6C14.6 18.4 13.4 21.4 13.3 25.6Z" fill="#3f2b20"/><path d="M11.3 21.6L32.4 19.4L32.9 21L30.6 21.5L30 25.4L22.3 26.3L21.6 23.2L20.2 23.4L19.8 26.6L12.8 27.2L12.2 23.4Z" fill="#3a3435" opacity=".9"/><path d="M13.4 23.6L19 23.1L18.7 25.7L13.8 26.1Z M22.8 22.7L29.5 22L29.1 24.6L23.2 25.2Z" fill="#b98f84"/><path d="M17.5 31.6C20 33 24.5 32.6 27 30.8" stroke="#b5705f" stroke-width="1.1" fill="none"/></g></g><circle cx="40.00" cy="39.73" r="10.80" fill="#fff"/><circle cx="40.00" cy="39.73" r="7.20" fill="#fff" stroke="#8a8a8a" stroke-width="1.80"/></svg>
<span style="left:2109.18px;top:1050.00px;font-size:21.3px;line-height:21.3px;color:#275fa9;transform:scaleX(0.9778);">Adam Bryant (Offline)</span>
<div style="left:381px;top:1089px;width:2065px;height:1.1px;background:#ececec;"></div>
<div style="left:402.2px;top:1109.4px;width:23.6px;height:23.2px;background:#fff;box-sizing:border-box;border:1.3px solid #4a4a4a;border-radius:3.5px;"></div>
<span style="left:461.83px;top:1113.00px;font-size:21.3px;line-height:21.3px;color:#275fa9;transform:scaleX(0.9867);">Data Deletion - Weekly Review - 06/11/2025</span>
<span style="left:1388.39px;top:1113.00px;font-size:21.3px;line-height:21.3px;color:#242424;transform:scaleX(1.0163);">6/11/2025</span>
<span style="left:1772.60px;top:1113.00px;font-size:21.3px;line-height:21.3px;color:#242424;transform:scaleX(0.8333);">Yes</span>
<svg style="left:2065.0px;top:1103.0px;overflow:visible" width="36" height="36" viewBox="0 0 48 48"><defs><clipPath id="avc5"><circle cx="24" cy="24" r="24"/></clipPath><filter id="avc5b" x="-20%" y="-20%" width="140%" height="140%"><feGaussianBlur stdDeviation="0.55"/></filter></defs><g clip-path="url(#avc5)"><rect width="48" height="48" fill="#e9e3dc"/><g filter="url(#avc5b)"><path d="M31 30L34 48H19L17 36Z" fill="#cf9a84"/><path d="M4 42L17.5 36.5C19 41 23 45.5 33.5 46.5L36 49H3Z" fill="#1f1f20"/><ellipse cx="23.4" cy="24.8" rx="10.9" ry="13.4" transform="rotate(-8 23 25)" fill="#dcab95"/><ellipse cx="25" cy="17.5" rx="9.6" ry="7" fill="#dcab95"/><path d="M11 25C8.2 17 9.8 8.6 16.4 5.2C19.6 2 27.8 2.2 31.6 5.8C36.8 8.4 38 16 35.8 24.5L33.9 22.5C34.2 18 32.4 14.6 29 12.8C25.5 15.6 20.5 14.6 17.3 16.6C14.6 18.4 13.4 21.4 13.3 25.6Z" fill="#3f2b20"/><path d="M11.3 21.6L32.4 19.4L32.9 21L30.6 21.5L30 25.4L22.3 26.3L21.6 23.2L20.2 23.4L19.8 26.6L12.8 27.2L12.2 23.4Z" fill="#3a3435" opacity=".9"/><path d="M13.4 23.6L19 23.1L18.7 25.7L13.8 26.1Z M22.8 22.7L29.5 22L29.1 24.6L23.2 25.2Z" fill="#b98f84"/><path d="M17.5 31.6C20 33 24.5 32.6 27 30.8" stroke="#b5705f" stroke-width="1.1" fill="none"/></g></g><circle cx="40.00" cy="39.73" r="10.80" fill="#fff"/><circle cx="40.00" cy="39.73" r="7.20" fill="#fff" stroke="#8a8a8a" stroke-width="1.80"/></svg>
<span style="left:2109.18px;top:1113.00px;font-size:21.3px;line-height:21.3px;color:#275fa9;transform:scaleX(0.9778);">Adam Bryant (Offline)</span>
<div style="left:381px;top:1152px;width:2065px;height:1.1px;background:#ececec;"></div>
<div style="left:379px;top:1261px;width:2067px;height:1.1px;background:#dcdcdc;"></div>
<span style="left:378.92px;top:1288.00px;font-size:21.3px;line-height:21.3px;color:#424242;transform:scaleX(0.9189);">Rows: 2</span>
<div style="left:994.3px;top:372.2px;width:132.6px;height:93.4px;background:transparent;box-sizing:border-box;border:8px solid #ff2600;"></div>
<svg style="left:280px;top:655px;" width="1075" height="125" viewBox="0 0 1075 125" fill="none"><ellipse cx="535.5" cy="60.5" rx="522.5" ry="51.5" stroke="#ff2600" stroke-width="7.8" fill="none"/></svg>
</div></body></html>
